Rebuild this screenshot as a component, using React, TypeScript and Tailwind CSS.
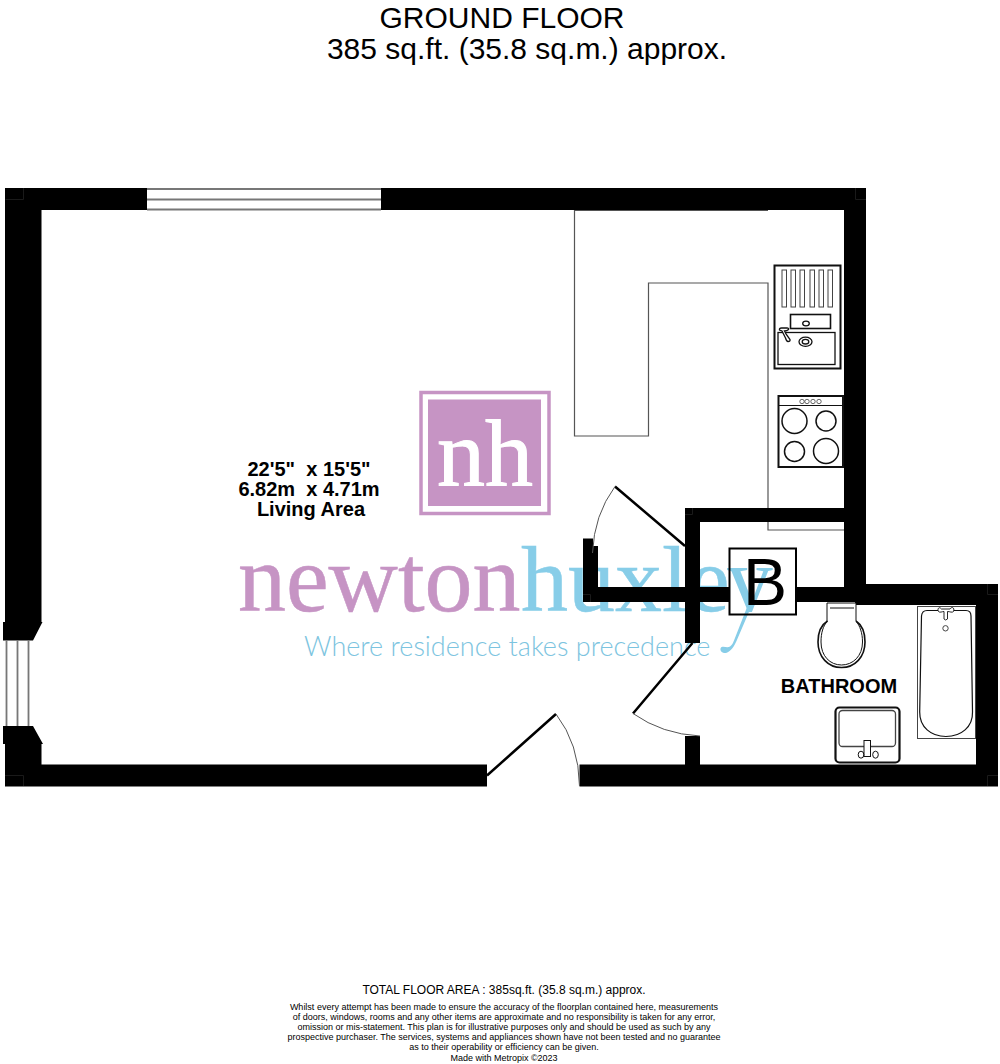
const slots = [782, 791, 800, 810, 819, 828];
const knobs = [802, 807, 813, 819];

function Watermark() {
  return (
    <g>
      <defs>
        <clipPath id="above-baseline">
          <rect x="700" y="540" width="90" height="72" />
        </clipPath>
      </defs>
      <rect x="421" y="392.5" width="128" height="121" fill="#fff" stroke="#c694c4" strokeWidth="3.5" />
      <rect x="428" y="399.5" width="113" height="106.5" fill="#c694c4" />
      <text x="437" y="486" fontSize="96" fill="#fff" stroke="#fff" strokeWidth="1" className="font-['Liberation_Serif',serif]">nh</text>
      <g className="font-['Liberation_Serif',serif]">
        <text x="238" y="611" fontSize="96" fill="#c694c4" stroke="#c694c4" strokeWidth=".5">newton</text>
        <text x="521" y="611" fontSize="94" fill="#87cde8" stroke="#87cde8" strokeWidth=".5">huxle</text>
        <text x="726" y="611" fontSize="94" fill="#87cde8" clipPath="url(#above-baseline)">y</text>
      </g>
      <path d="M751.500 606L736.500 641C733 649 729 652.500 725.500 653C722 653 720 651 720.500 648.500C722 645 727 648.500 730 646.500C732 645 733 643 734 640.500L747.500 606Z" fill="#87cde8" />
      <text x="304" y="656" fontSize="27" fill="#7cc4e0" className="font-[Lato,sans-serif] font-light">
        Where residence takes precedence
      </text>
    </g>
  );
}

function Walls() {
  return (
    <g>
      <path d="M5 188H147V210H41.500V622H42.500L33 640.500H3V622H5ZM381 188H866V584H998V786.500H579.500V764.500H685V736H700V764.500H976V605H855V602H796V587H844V522H700V587H729V602H700V643H685V602H583V538.500H593V546H598V587H685V508H844V210H381ZM3 726H33L43 744H41.500V764.500H487V786.500H5V744H3Z" />
      <g fill="none" stroke="#1a1a1a" strokeWidth="1">
        <path d="M5.500 199.500H23.500V188M855.500 188V199.500H866M5 775.500H23.500V786M998 775.500H987.500V786M987.500 584V594.500H998M685 514.500H692.500V508M583 594.500H590.500V602" />
      </g>
      <path d="M147 189H381M147 199.500H381M147 209.500H381M6.500 640V726M17.500 640V726M28.500 640V726" fill="none" stroke="#777" strokeWidth="1.800" />
    </g>
  );
}

function Doors() {
  return (
    <g fill="none" stroke="#000">
      <path d="M685 546L615 486.500M692.500 643L633 713.500M487 775.500L556 714" strokeWidth="2.500" />
      <path d="M615 486.500Q594 515 592.500 553M633 713.500Q662 734 700 736M556 714Q579 744 579.500 786" stroke="#555" strokeWidth="1" />
    </g>
  );
}

function Kitchen() {
  return (
    <g fill="none" stroke="#111">
      <path d="M768 210.500H574.500V436H648.500V283H768V530H844" stroke="#555" strokeWidth="1.200" />
      <path d="M768 508V522" stroke="#000" strokeWidth="3" />
      <rect x="774.500" y="265.500" width="66" height="103" strokeWidth="2" />
      {slots.map((x) => (
        <rect key={x} x={x} y="270" width="4.500" height="37" stroke="#444" />
      ))}
      <rect x="790.500" y="314.500" width="40" height="14" strokeWidth="1.600" />
      <ellipse cx="806" cy="323.500" rx="3.300" ry="2.400" strokeWidth="1.300" />
      <rect x="778" y="332.500" width="57" height="32" strokeWidth="1.300" />
      <ellipse cx="805.500" cy="341.700" rx="6.500" ry="4.600" strokeWidth="1.300" />
      <ellipse cx="805.500" cy="341.700" rx="3.300" ry="2.300" strokeWidth="1.300" />
      <path d="M779.500 330Q779 328 781.500 328H787Q789 328 788.500 329.500Q787 331 784.500 331L786 334L790 339.500Q790.500 341.500 788 341.500Q786.500 341.500 785.500 338L782 331Z" fill="#fff" strokeWidth="1.300" />
      <rect x="778.500" y="396" width="64.500" height="71" strokeWidth="2" />
      <path d="M779 405.500H842" />
      {knobs.map((x) => (
        <circle key={x} cx={x} cy="401.500" r="2.200" stroke="#444" strokeWidth=".8" />
      ))}
      <g strokeWidth="1.500">
        <circle cx="794.500" cy="421" r="12.500" />
        <circle cx="826" cy="421" r="10" />
        <circle cx="794.500" cy="451.500" r="10" />
        <circle cx="826" cy="451" r="12.500" />
      </g>
    </g>
  );
}

function Bathroom() {
  return (
    <g fill="none" stroke="#111">
      <path d="M827 621V603H856V621" fill="#fff" />
      <path d="M830 608H854" />
      <path d="M827.500 621C821 625 818 633 818 642C818 657 828 667.500 841.500 667.500C855 667.500 865 657 865 642C865 633 862 625 856 621" strokeWidth="1.600" />
      <path d="M827.500 621C823 626 821 633 821 642C821 656 830 665 841.500 665C853 665 862.500 656 862.500 642C862.500 633 860 626 856 621" />
      <rect x="835.500" y="707.500" width="64" height="55" rx="4" strokeWidth="2.200" />
      <rect x="839" y="710.500" width="56.500" height="36" rx="3.500" stroke="#444" strokeWidth="1.300" />
      <rect x="864" y="740.500" width="6.500" height="16" fill="#fff" />
      <ellipse cx="861" cy="754.700" rx="2.800" ry="3.500" />
      <ellipse cx="875.500" cy="754.700" rx="2.800" ry="3.500" />
      <rect x="917.500" y="606.500" width="58" height="132" stroke="#444" />
      <path d="M927 610.500H966Q971 610.500 971 616L972.500 712C973 727 961 736.500 946 736.500C931 736.500 919.500 727 919.700 712L921.500 616Q922 610.500 927 610.500Z" strokeWidth="1.200" />
      <path d="M944 609H941.500C939 606 937 609 938.500 611.500C940 613 942 611.500 944 611.500V619Q945.500 621 947.500 619V611.500C950 611.500 952 613 953.500 611.500C955 608 952 606 950 609Z" fill="#fff" strokeWidth=".9" />
      <circle cx="945.500" cy="628.300" r="2.700" stroke="#444" />
    </g>
  );
}

export default function App() {
  return (
    <main className="w-full overflow-hidden bg-white font-['Liberation_Sans',Arial,sans-serif] text-black">
      <h1 className="h-45 whitespace-pre pl-1 pt-0.5 text-center text-[30px] leading-[31px]">
        {"GROUND FLOOR\n      385 sq.ft. (35.8 sq.m.) approx."}
      </h1>
      <svg viewBox="0 180 1000 620" className="block w-full" role="img" aria-label="Ground floor plan">
        <Watermark />
        <Walls />
        <Doors />
        <Kitchen />
        <Bathroom />
        <rect x="729.500" y="548.500" width="66.500" height="66" fill="none" stroke="#000" strokeWidth="2" />
        <text x="765" y="605" fontSize="66" textAnchor="middle">B</text>
        <g fontSize="20" fontWeight="700" textAnchor="middle">
          <text x="309" y="476">{"22'5\"\u00a0 x 15'5\""}</text>
          <text x="309" y="496">{"6.82m\u00a0 x 4.71m"}</text>
          <text x="311" y="516">Living Area</text>
          <text x="839" y="693">BATHROOM</text>
        </g>
      </svg>
      <footer className="mt-[182px] pl-2 text-center">
        <p className="text-[12px] leading-4">TOTAL FLOOR AREA : 385sq.ft. (35.8 sq.m.) approx.</p>
        <p className="mt-1 text-[9px] leading-[10px]">
          Whilst every attempt has been made to ensure the accuracy of the floorplan contained here, measurements
          <br />
          of doors, windows, rooms and any other items are approximate and no responsibility is taken for any error,
          <br />
          omission or mis-statement. This plan is for illustrative purposes only and should be used as such by any
          <br />
          prospective purchaser. The services, systems and appliances shown have not been tested and no guarantee
          <br />
          as to their operability or efficiency can be given.
        </p>
        <p className="text-[9px] leading-3">Made with Metropix ©2023</p>
      </footer>
    </main>
  );
}
